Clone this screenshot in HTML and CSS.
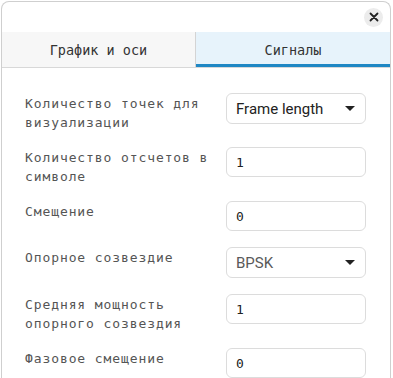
FILE: index.html
```html
<!DOCTYPE html>
<html lang="ru">
<head>
    <meta charset="UTF-8">
    <meta name="viewport" content="width=device-width, initial-scale=1.0">
    <title>Настройки</title>
    <link rel="stylesheet" href="styles.css">
</head>
<body>
    <div class="dialog">
        <div class="dialog-header">
            <button class="close-btn" title="Закрыть">
                <svg width="10" height="10" viewBox="0 0 10 10">
                    <path d="M1.5 1.5 L8.5 8.5 M8.5 1.5 L1.5 8.5" stroke="#222" stroke-width="1.8" stroke-linecap="round"/>
                </svg>
            </button>
        </div>

        <div class="tabs">
            <div class="tab">График и оси</div>
            <div class="tab active">Сигналы</div>
        </div>

        <div class="panel">
            <div class="form-grid">
                <label class="field-label">Количество точек для визуализации</label>
                <div class="select">
                    <span class="select-value">Frame length</span>
                    <span class="select-arrow"></span>
                </div>

                <label class="field-label">Количество отсчетов в символе</label>
                <input class="field-input" type="text" value="1">

                <label class="field-label">Смещение</label>
                <input class="field-input" type="text" value="0">

                <label class="field-label">Опорное созвездие</label>
                <div class="select muted">
                    <span class="select-value">BPSK</span>
                    <span class="select-arrow"></span>
                </div>

                <label class="field-label">Средняя мощность опорного созвездия</label>
                <input class="field-input" type="text" value="1">

                <label class="field-label">Фазовое смещение</label>
                <input class="field-input" type="text" value="0">
            </div>
        </div>
    </div>
</body>
</html>
```

FILE: styles.css
```css
body {
    margin: 0;
    background-color: #ffffff;
    font-family: 'DejaVu Sans Mono', monospace;
    height: 378px;
    overflow: hidden;
}

.dialog {
    margin: 1px 2px 0 1px;
    border: 1px solid #cfcfcf;
    border-bottom: none;
    border-radius: 8px 8px 0 0;
    background-color: #ffffff;
    height: 377px;
    box-sizing: border-box;
    overflow: hidden;
}

.dialog-header {
    height: 30px;
    display: flex;
    justify-content: flex-end;
    align-items: center;
    padding-right: 7px;
}

.close-btn {
    width: 19px;
    height: 19px;
    border: none;
    border-radius: 50%;
    background-color: #ececec;
    padding: 0;
    display: flex;
    justify-content: center;
    align-items: center;
    cursor: pointer;
}

.tabs {
    display: grid;
    grid-template-columns: 1fr 1fr;
    border-bottom: 1px solid #d8d8d8;
}

.tab {
    height: 35px;
    display: flex;
    justify-content: center;
    align-items: center;
    font-size: 13.5px;
    color: #333333;
    background-color: #f7f7f7;
    box-sizing: border-box;
}

.tab:first-child {
    border-right: 1px solid #d4d4d4;
}

.tab.active {
    background-color: #e7f3fb;
    border-bottom: 3px solid #1f87c4;
    padding-top: 3px;
}

.panel {
    padding: 25px 24px 0 23px;
}

.form-grid {
    display: grid;
    grid-template-columns: 1fr 140px;
    column-gap: 12px;
    row-gap: 16px;
    align-items: start;
}

.field-label {
    font-size: 13px;
    line-height: 19px;
    letter-spacing: 0.9px;
    color: #555555;
    margin: 1px 0 -1px;
}

.field-input,
.select {
    height: 30px;
    width: 140px;
    border: 1px solid #dcdcdc;
    border-radius: 6px;
    box-sizing: border-box;
    background-color: #ffffff;
}

.field-input {
    font-family: 'DejaVu Sans Mono', monospace;
    font-size: 13px;
    color: #222222;
    padding: 0 9px;
    outline: none;
}

.select {
    height: 31px;
    display: flex;
    align-items: center;
    justify-content: space-between;
    padding: 0 10px 0 9px;
    font-family: 'Roboto', sans-serif;
    font-size: 15px;
    color: #222222;
}

.select.muted {
    color: #5a5a5a;
}

.select-arrow {
    width: 0;
    height: 0;
    border-left: 5px solid transparent;
    border-right: 5px solid transparent;
    border-top: 5px solid #222222;
}
```
